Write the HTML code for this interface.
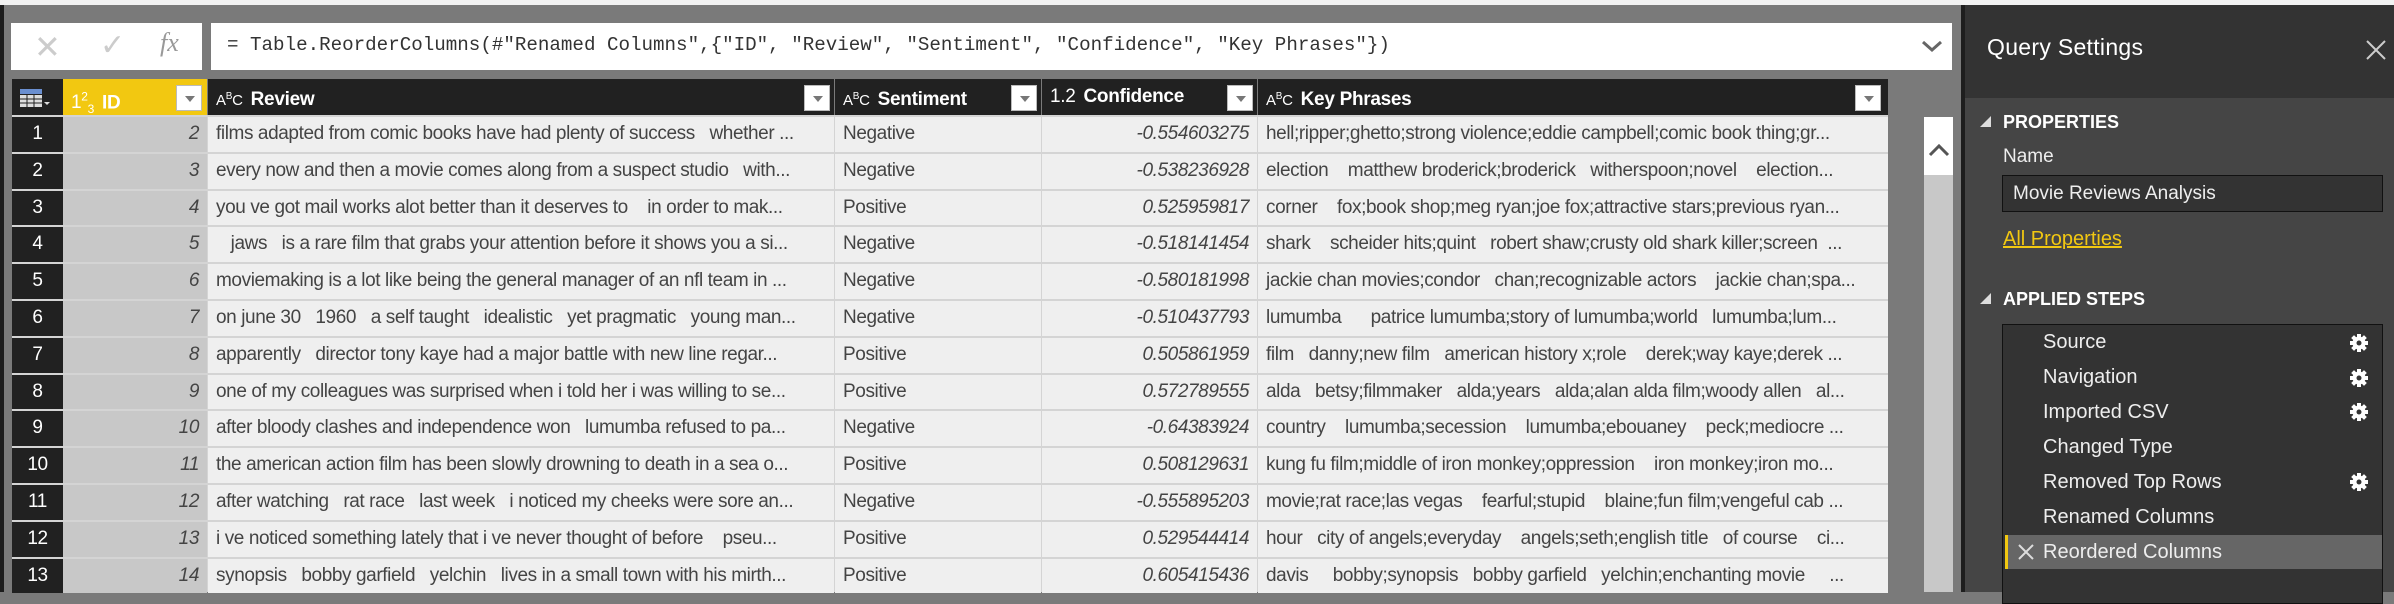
<!DOCTYPE html>
<html><head><meta charset="utf-8"><style>
*{margin:0;padding:0;box-sizing:border-box}
body{width:2394px;height:592px;overflow:hidden;background:#7a7a7a;position:relative;font-family:"Liberation Sans",sans-serif}
.a{position:absolute}
.cell{position:absolute;height:34.8px;line-height:34.8px;font-size:19px;color:#444;white-space:pre;overflow:hidden;text-overflow:ellipsis;padding:0 8px;letter-spacing:-0.4px}
.hd{position:absolute;top:79px;height:36px;background:#212121;color:#fff;font-weight:bold;font-size:19px;line-height:36px;letter-spacing:-0.3px}
.dd{position:absolute;top:85px;width:26px;height:26px;background:#fff;border:1px solid #bbb}
.dd:after{content:"";position:absolute;left:8px;top:10px;border-left:5px solid transparent;border-right:5px solid transparent;border-top:6px solid #777}
.ic{font-weight:normal;font-size:15px;margin-right:8px}
.step{position:absolute;left:2043px;font-size:20px;color:#eee}
.gear{position:absolute;left:2349px}
</style></head><body>
<div class="a" style="left:0;top:0;width:2394px;height:5px;background:#f2f2f2"></div>
<div class="a" style="left:0;top:5px;width:4px;height:587px;background:#1c1c1c"></div>
<!-- formula bar -->
<div class="a" style="left:11px;top:23px;width:191px;height:47px;background:#fff"></div>
<div class="a" style="left:34px;top:28px;font-size:32px;color:#ccc">✕</div>
<div class="a" style="left:100px;top:28px;font-size:30px;color:#ccc">✓</div>
<div class="a" style="left:160px;top:28px;font-size:26px;color:#999;font-family:'Liberation Serif',serif;font-style:italic">fx</div>
<div class="a" style="left:211px;top:23px;width:1741px;height:47px;background:#fff"></div>
<div class="a" style="left:227px;top:34px;font-family:'Liberation Mono',monospace;font-size:19.2px;color:#333;white-space:pre">= Table.ReorderColumns(#"Renamed Columns",{"ID", "Review", "Sentiment", "Confidence", "Key Phrases"})</div>
<svg class="a" style="left:1920px;top:38px" width="24" height="16"><path d="M3 4 L12 12 L21 4" stroke="#666" stroke-width="3" fill="none"/></svg>
<!-- headers -->
<div class="hd" style="left:12px;width:51px"><svg style="position:absolute;left:8px;top:10px" width="30" height="18"><rect x="0" y="0" width="22" height="5" fill="#6a8fd0"/><rect x="0" y="6" width="22" height="12" fill="#ddd"/><path d="M0 10H22M0 14H22M7 6V18M14 6V18" stroke="#212121" stroke-width="1"/><path d="M24 13l3 3 3-3z" fill="#ddd"/></svg></div>
<div class="hd" style="left:63px;width:144px;background:#f2c811;padding-left:8px"><span class="ic" style="color:#fff;font-size:19px">1<sup style="font-size:12px">2</sup><sub style="font-size:12px">3</sub></span>ID</div>
<div class="hd" style="left:208px;width:626px;padding-left:8px"><span class="ic">A<sup style="font-size:10px">B</sup>C</span>Review</div>
<div class="hd" style="left:835px;width:206px;padding-left:8px"><span class="ic">A<sup style="font-size:10px">B</sup>C</span>Sentiment</div>
<div class="hd" style="left:1042px;width:215px;padding-left:8px"><span class="ic" style="font-size:19px">1.2</span>Confidence</div>
<div class="hd" style="left:1258px;width:630px;padding-left:8px"><span class="ic">A<sup style="font-size:10px">B</sup>C</span>Key Phrases</div>
<div class="dd" style="left:176px"></div><div class="dd" style="left:804px"></div><div class="dd" style="left:1011px"></div><div class="dd" style="left:1227px"></div><div class="dd" style="left:1855px"></div>
<!-- table body -->
<div class="a" style="left:12px;top:115px;width:1876px;height:477px;background:#d4d4d4"></div>
<div id="rows"></div>
<!-- scrollbar -->
<div class="a" style="left:1924px;top:117px;width:29px;height:475px;background:#c8c8c8"></div>
<div class="a" style="left:1924px;top:117px;width:29px;height:58px;background:#fff"></div>
<svg class="a" style="left:1928px;top:143px" width="22" height="14"><path d="M2 12 L11 3 L20 12" stroke="#555" stroke-width="3" fill="none"/></svg>
<!-- panel -->
<div class="a" style="left:1961px;top:5px;width:4px;height:587px;background:#1e1e1e"></div>
<div class="a" style="left:1965px;top:5px;width:429px;height:93px;background:#333"></div>
<div class="a" style="left:1965px;top:98px;width:429px;height:494px;background:#454545"></div>
<div class="a" style="left:1987px;top:34px;font-size:23px;color:#fff;letter-spacing:0.3px">Query Settings</div>
<svg class="a" style="left:2366px;top:40px" width="20" height="20"><path d="M1 1L19 19M19 1L1 19" stroke="#ccc" stroke-width="2"/></svg>
<svg class="a" style="left:1980px;top:116px" width="12" height="12"><path d="M11 0V11H0Z" fill="#ddd"/></svg>
<div class="a" style="left:2003px;top:112px;font-size:18px;font-weight:bold;color:#fff">PROPERTIES</div>
<div class="a" style="left:2003px;top:146px;font-size:19px;color:#eee">Name</div>
<div class="a" style="left:2002px;top:175px;width:381px;height:37px;background:#333;border:1px solid #111"></div>
<div class="a" style="left:2013px;top:183px;font-size:19px;color:#eee">Movie Reviews Analysis</div>
<div class="a" style="left:2003px;top:228px;font-size:20px;color:#f2c811;text-decoration:underline">All Properties</div>
<svg class="a" style="left:1980px;top:293px" width="12" height="12"><path d="M11 0V11H0Z" fill="#ddd"/></svg>
<div class="a" style="left:2003px;top:289px;font-size:18px;font-weight:bold;color:#fff">APPLIED STEPS</div>
<div class="a" style="left:2002px;top:324px;width:381px;height:280px;background:#333;border:1px solid #111"></div>
<div class="a" style="left:2005px;top:535px;width:377px;height:34px;background:#666"></div>
<div class="a" style="left:2005px;top:535px;width:3px;height:34px;background:#f2c811"></div>
<div class="step" style="top:331px">Source</div>
<div class="step" style="top:366px">Navigation</div>
<div class="step" style="top:401px">Imported CSV</div>
<div class="step" style="top:436px">Changed Type</div>
<div class="step" style="top:471px">Removed Top Rows</div>
<div class="step" style="top:506px">Renamed Columns</div>
<svg class="a" style="left:2018px;top:544px" width="16" height="16"><path d="M1 1L15 15M15 1L1 15" stroke="#ddd" stroke-width="2"/></svg>
<div class="step" style="top:541px">Reordered Columns</div>
<svg width="0" height="0" style="position:absolute"><defs><g id="g"><circle cx="10" cy="10" r="6.5" fill="#fff"/><g stroke="#fff" stroke-width="4"><path d="M10 1V19M1 10H19M3.6 3.6L16.4 16.4M16.4 3.6L3.6 16.4"/></g><circle cx="10" cy="10" r="2.5" fill="#333"/></g></defs></svg>
<svg class="gear" style="top:333px" width="20" height="20"><use href="#g"/></svg>
<svg class="gear" style="top:368px" width="20" height="20"><use href="#g"/></svg>
<svg class="gear" style="top:402px" width="20" height="20"><use href="#g"/></svg>
<svg class="gear" style="top:472px" width="20" height="20"><use href="#g"/></svg>
<script>
var d=[
[2,"films adapted from comic books have had plenty of success   whether ...","Negative","-0.554603275","hell;ripper;ghetto;strong violence;eddie campbell;comic book thing;gr..."],
[3,"every now and then a movie comes along from a suspect studio   with...","Negative","-0.538236928","election    matthew broderick;broderick   witherspoon;novel    election..."],
[4,"you ve got mail works alot better than it deserves to    in order to mak...","Positive","0.525959817","corner    fox;book shop;meg ryan;joe fox;attractive stars;previous ryan..."],
[5,"   jaws   is a rare film that grabs your attention before it shows you a si...","Negative","-0.518141454","shark    scheider hits;quint   robert shaw;crusty old shark killer;screen  ..."],
[6,"moviemaking is a lot like being the general manager of an nfl team in ...","Negative","-0.580181998","jackie chan movies;condor   chan;recognizable actors    jackie chan;spa..."],
[7,"on june 30   1960   a self taught   idealistic   yet pragmatic   young man...","Negative","-0.510437793","lumumba      patrice lumumba;story of lumumba;world   lumumba;lum..."],
[8,"apparently   director tony kaye had a major battle with new line regar...","Positive","0.505861959","film   danny;new film   american history x;role    derek;way kaye;derek ..."],
[9,"one of my colleagues was surprised when i told her i was willing to se...","Positive","0.572789555","alda   betsy;filmmaker   alda;years   alda;alan alda film;woody allen   al..."],
[10,"after bloody clashes and independence won   lumumba refused to pa...","Negative","-0.64383924","country    lumumba;secession    lumumba;ebouaney    peck;mediocre ..."],
[11,"the american action film has been slowly drowning to death in a sea o...","Positive","0.508129631","kung fu film;middle of iron monkey;oppression    iron monkey;iron mo..."],
[12,"after watching   rat race   last week   i noticed my cheeks were sore an...","Negative","-0.555895203","movie;rat race;las vegas    fearful;stupid    blaine;fun film;vengeful cab ..."],
[13,"i ve noticed something lately that i ve never thought of before    pseu...","Positive","0.529544414","hour   city of angels;everyday    angels;seth;english title   of course    ci..."],
[14,"synopsis   bobby garfield   yelchin   lives in a small town with his mirth...","Positive","0.605415436","davis     bobby;synopsis   bobby garfield   yelchin;enchanting movie     ..."]];
var h="";
for(var i=0;i<d.length;i++){var t=117+i*36.8,r=d[i];
h+='<div class="cell" style="left:12px;top:'+t+'px;width:51px;background:#212121;color:#fff;text-align:center">'+(i+1)+'</div>';
h+='<div class="cell" style="left:63px;top:'+t+'px;width:144px;background:#c8c8c8;text-align:right;font-style:italic">'+r[0]+'</div>';
h+='<div class="cell" style="left:208px;top:'+t+'px;width:626px;background:#efefef">'+r[1]+'</div>';
h+='<div class="cell" style="left:835px;top:'+t+'px;width:206px;background:#efefef">'+r[2]+'</div>';
h+='<div class="cell" style="left:1042px;top:'+t+'px;width:215px;background:#efefef;text-align:right;font-style:italic">'+r[3]+'</div>';
h+='<div class="cell" style="left:1258px;top:'+t+'px;width:630px;background:#efefef">'+r[4]+'</div>';}
document.getElementById("rows").innerHTML=h;
</script>
</body></html>
